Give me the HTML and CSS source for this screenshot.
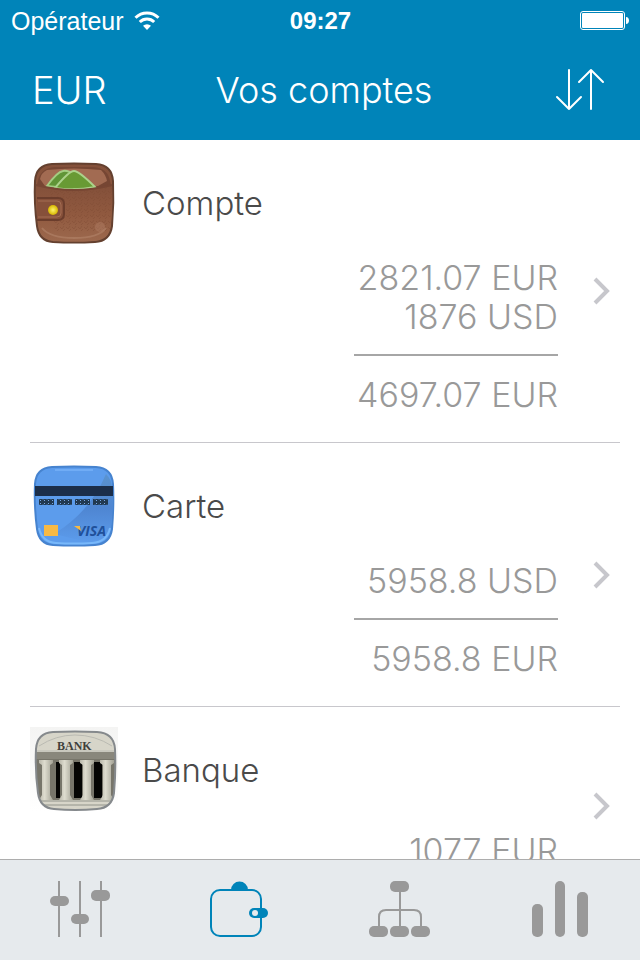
FILE: index.html
```html
<!DOCTYPE html>
<html lang="fr">
<head>
    <meta charset="UTF-8">
    <meta name="viewport" content="width=device-width, initial-scale=1.0">
    <title>Vos comptes</title>
    <link rel="stylesheet" href="styles.css">
</head>
<body>

<header class="app-header">
    <div class="status-bar">
        <div class="carrier">
            <span>Opérateur</span>
            <svg class="wifi-icon" width="26" height="20" viewBox="0 0 26 20" aria-hidden="true">
                <path d="M1.500 6.800a16.300 16.300 0 0 1 23 0" fill="none" stroke="#fff" stroke-width="3"/>
                <path d="M5.800 11a10.200 10.200 0 0 1 14.400 0" fill="none" stroke="#fff" stroke-width="3"/>
                <path d="M13 19l-4-4.200a5.700 5.700 0 0 1 8 0z" fill="#fff"/>
            </svg>
        </div>
        <div class="clock">09:27</div>
        <div class="battery">
            <svg width="50" height="20" viewBox="0 0 50 20" aria-hidden="true">
                <rect x="0.500" y="0.500" width="44" height="18" rx="2.500" fill="none" stroke="#fff"/>
                <rect x="2" y="2" width="41" height="15" rx="1" fill="#fff"/>
                <path d="M46 6c4 0 4 7 0 7z" fill="#fff"/>
            </svg>
        </div>
    </div>
    <div class="title-bar">
        <button type="button" class="currency-button">EUR</button>
        <h1>Vos comptes</h1>
        <button type="button" class="sort-button" aria-label="Trier">
            <svg width="50" height="44" viewBox="0 0 50 44" fill="none" stroke="#fff" stroke-width="2" stroke-linecap="round" stroke-linejoin="round">
                <path d="M14 2v39M2 29l12 12 12-12"/>
                <path d="M36 41V2M24 14L36 2l12 12"/>
            </svg>
        </button>
    </div>
</header>

<main class="accounts">
    <a href="#compte" class="account">
        <span class="account-body">
            <span class="account-head">
                <svg class="account-icon" viewBox="0 0 88 88" aria-hidden="true">
                    <defs>
                        <linearGradient id="leather" x1="0" y1="0" x2="0" y2="1">
                            <stop offset="0" stop-color="#83503a"/>
                            <stop offset="0.500" stop-color="#90593f"/>
                            <stop offset="1" stop-color="#9c684d"/>
                        </linearGradient>
                        <pattern id="grain" width="6" height="6" patternUnits="userSpaceOnUse">
                            <path d="M0 2l2 2 2-3M3 6l2-2" fill="none" stroke="#7c4833" stroke-width="1" opacity="0.400"/>
                        </pattern>
                        <radialGradient id="button">
                            <stop offset="0" stop-color="#fff36b"/>
                            <stop offset="1" stop-color="#d6b500"/>
                        </radialGradient>
                    </defs>
                    <path d="M22 5Q44 4 66 5Q82 6 83 22Q84 44 82 67Q80 82 65 83Q44 84 23 83Q9 82 7 67Q4 44 5 22Q6 6 22 5z" fill="url(#leather)" stroke="#64402f" stroke-width="2"/>
                    <path d="M25 8H63Q78 9 80 22L81 26Q44 40 7 26Q9 9 25 8z" fill="#764633"/>
                    <path d="M17 11Q44 8 71 11Q76 16 77 22L68 27H15L10 20Q11 14 17 11z" fill="#a26b52"/>
                    <path d="M17 27Q27 13 33 12Q38 11 44 16L36 29z" fill="#609537" stroke="#a4cc82" stroke-width="2"/>
                    <path d="M25 29Q39 12 44 12Q49 12 65 28Q45 32 25 29z" fill="#689a34" stroke="#acd28b" stroke-width="2"/>
                    <path d="M6 26Q44 36 82 26Q83 46 81 64Q79 81 62 82Q44 83 26 82Q10 81 8 64Q6 46 6 26z" fill="url(#leather)"/>
                    <path d="M20 31Q50 33 82 27L80 72L25 73z" fill="url(#grain)"/>
                    <path d="M6 26Q44 36 82 26" fill="none" stroke="#774633" stroke-width="2"/>
                    <path d="M7 39H28Q34 39 34 45V55Q34 61 28 61H7" fill="#86503a" stroke="#6b3d2c" stroke-width="2"/>
                    <path d="M8 42H27Q31 42 31 46V54Q31 58 27 58H8" fill="none" stroke="#a36c52" stroke-width="1"/>
                    <circle cx="23" cy="51" r="5" fill="url(#button)"/>
                    <path d="M12 69Q20 79 44 79Q69 79 76 69" fill="none" stroke="#b8896f" stroke-width="2" opacity="0.500"/>
                    <circle cx="70" cy="68" r="5" fill="#b48369" opacity="0.400"/>
                </svg>
                <span class="account-name">Compte</span>
            </span>
            <span class="amounts">
                <span>2821.07 EUR</span>
                <span>1876 USD</span>
                <span class="total">4697.07 EUR</span>
            </span>
        </span>
        <svg class="chevron" width="20" height="28" viewBox="0 0 20 28" aria-hidden="true"><path d="M4 2l12 12L4 26"/></svg>
    </a>

    <a href="#carte" class="account">
        <span class="account-body">
            <span class="account-head">
                <svg class="account-icon" viewBox="0 0 88 88" aria-hidden="true">
                    <defs>
                        <linearGradient id="shine" x1="0" y1="0" x2="0" y2="1">
                            <stop offset="0" stop-color="#5a93cf"/>
                            <stop offset="0.500" stop-color="#4f86d2"/>
                            <stop offset="1" stop-color="#5c9cec"/>
                        </linearGradient>
                        <pattern id="digits" x="9" y="37" width="4" height="6" patternUnits="userSpaceOnUse">
                            <rect width="4" height="6" rx="1" fill="#213951"/>
                            <rect x="1" y="1" width="1" height="1" fill="#79a8e8"/>
                            <rect x="1" y="4" width="1" height="1" fill="#79a8e8"/>
                        </pattern>
                    </defs>
                    <path d="M22 5Q44 4 66 5Q82 6 83 22Q84 44 82 67Q80 82 65 83Q44 84 23 83Q9 82 7 67Q4 44 5 22Q6 6 22 5z" fill="#5c9cec" stroke="#4683cf" stroke-width="2"/>
                    <path d="M24 72Q60 50 76 12Q82 18 82 26Q84 44 81 64Q79 80 62 81z" fill="url(#shine)"/>
                    <path d="M9 66Q12 80 26 81Q44 82 62 81Q77 80 80 66" fill="none" stroke="#78b8fa" stroke-width="2"/>
                    <path d="M25 8H63" stroke="#70acf5" stroke-width="2"/>
                    <rect x="5" y="24" width="78" height="10" fill="#1b2e4a"/>
                    <path d="M9 37h15v6H9zM27 37h15v6H27zM45 37h15v6H45zM63 37h15v6H63z" fill="url(#digits)"/>
                    <rect x="14" y="63" width="14" height="11" fill="#f7b944"/>
                    <text x="47" y="74" class="visa">VISA</text>
                    <path d="M44 64h6l1 5z" fill="#f7b944"/>
                </svg>
                <span class="account-name">Carte</span>
            </span>
            <span class="amounts">
                <span>5958.8 USD</span>
                <span class="total">5958.8 EUR</span>
            </span>
        </span>
        <svg class="chevron" width="20" height="28" viewBox="0 0 20 28" aria-hidden="true"><path d="M4 2l12 12L4 26"/></svg>
    </a>

    <a href="#banque" class="account">
        <span class="account-body">
            <span class="account-head">
                <svg class="account-icon" viewBox="0 0 88 88" aria-hidden="true">
                    <defs>
                        <linearGradient id="column">
                            <stop offset="0" stop-color="#b9b7aa"/>
                            <stop offset="0.400" stop-color="#dedccf"/>
                            <stop offset="1" stop-color="#a3a295"/>
                        </linearGradient>
                        <linearGradient id="backdrop" x1="0" y1="0" x2="0" y2="1">
                            <stop offset="0" stop-color="#f4f4f3"/>
                            <stop offset="1" stop-color="#fff"/>
                        </linearGradient>
                        <clipPath id="facade">
                            <path d="M23 6Q45 5 67 6Q84 7 85 23Q86 45 84 67Q82 82 67 83Q45 85 24 83Q10 82 8 67Q5 45 6 23Q7 7 23 6z"/>
                        </clipPath>
                    </defs>
                    <rect x="0" y="1" width="88" height="84" fill="url(#backdrop)"/>
                    <g clip-path="url(#facade)">
                        <path d="M0 0h88v88H0z" fill="#d7d5c9"/>
                        <path d="M9 20Q26 9 45 9Q65 9 82 20M6 25h80" fill="none" stroke="#babab2" stroke-width="1"/>
                        <path d="M5 26h82v7H5z" fill="#89877c"/>
                        <path d="M5 33h82v41H5z" fill="#77756a"/>
                        <path d="M26 36h4v36h-4zM44 36h8v36h-8zM64 36h8v36h-8z" fill="#050504"/>
                        <g fill="url(#column)">
                            <path d="M9 34h14v3l-3 2v30l3 5H9l3-5V39l-3-2z"/>
                            <path d="M29 34h14v3l-3 2v30l3 5H29l3-5V39l-3-2z"/>
                            <path d="M50 34h14v3l-3 2v30l3 5H50l3-5V39l-3-2z"/>
                            <path d="M70 34h14v3l-3 2v30l3 5H70l3-5V39l-3-2z"/>
                        </g>
                        <path d="M8 75h75M14 79h64" fill="none" stroke="#92948b" stroke-width="1"/>
                    </g>
                    <path d="M23 6Q45 5 67 6Q84 7 85 23Q86 45 84 67Q82 82 67 83Q45 85 24 83Q10 82 8 67Q5 45 6 23Q7 7 23 6z" fill="none" stroke="#85898c" stroke-width="2"/>
                    <text x="27" y="24" class="bank">BANK</text>
                </svg>
                <span class="account-name">Banque</span>
            </span>
            <span class="amounts">
                <span>1077 EUR</span>
            </span>
        </span>
        <svg class="chevron" width="20" height="28" viewBox="0 0 20 28" aria-hidden="true"><path d="M4 2l12 12L4 26"/></svg>
    </a>
</main>

<nav class="tab-bar">
    <a href="#reglages" aria-label="Réglages">
        <svg width="64" height="60" viewBox="0 0 64 60" fill="#999">
            <path d="M10 2h2v56h-2zM31 2h2v56h-2zM52 2h2v56h-2z"/>
            <rect x="2" y="17" width="19" height="10" rx="5"/>
            <rect x="23" y="35" width="18" height="10" rx="5"/>
            <rect x="43" y="11" width="19" height="11" rx="5"/>
        </svg>
    </a>
    <a href="#comptes" aria-label="Comptes" aria-current="page">
        <svg width="64" height="60" viewBox="0 0 64 60">
            <path d="M23 11a8.500 8.500 0 0 1 17 0z" fill="#0084b9"/>
            <rect x="3" y="11" width="50" height="46" rx="9" fill="none" stroke="#0084b9" stroke-width="2"/>
            <rect x="41" y="29" width="19" height="10" rx="5" fill="#0084b9"/>
            <circle cx="47" cy="34" r="3" fill="#e6eaed"/>
        </svg>
    </a>
    <a href="#categories" aria-label="Catégories">
        <svg width="64" height="60" viewBox="0 0 64 60" fill="#999">
            <path d="M32 12v36M11 48V38q0-7 7-7h28q7 0 7 7v10" fill="none" stroke="#999" stroke-width="2"/>
            <rect x="22" y="2" width="19" height="11" rx="5"/>
            <rect x="1" y="47" width="19" height="11" rx="5"/>
            <rect x="22" y="47" width="19" height="11" rx="5"/>
            <rect x="43" y="47" width="19" height="11" rx="5"/>
        </svg>
    </a>
    <a href="#statistiques" aria-label="Statistiques">
        <svg width="64" height="60" viewBox="0 0 64 60" fill="#999">
            <rect x="4" y="25" width="11" height="33" rx="5"/>
            <rect x="27" y="2" width="10" height="56" rx="5"/>
            <rect x="49" y="13" width="11" height="45" rx="5"/>
        </svg>
    </a>
</nav>

</body>
</html>
```

FILE: styles.css
```css
/* Global Styles */
* {
    box-sizing: border-box;
}

body {
    font-family: 'Inter', 'Liberation Sans', sans-serif;
    font-weight: 300;
    background: white;
    color: #4a4a4a;
    margin: 0;
    height: 100vh;
    display: flex;
    flex-direction: column;
}

button {
    background: none;
    border: none;
    padding: 0;
    color: inherit;
    font: inherit;
    cursor: pointer;
}

a {
    color: inherit;
    text-decoration: none;
}

svg {
    display: block;
}

/* Header */
.app-header {
    background: #0084b9;
    color: white;
    flex: none;
}

.status-bar {
    display: grid;
    grid-template-columns: 1fr auto 1fr;
    align-items: center;
    height: 42px;
    padding: 0 10px 0 11px;
    font-family: 'Liberation Sans', Arial, sans-serif;
    font-size: 25px;
    font-weight: 400;
}

.carrier {
    display: flex;
    align-items: center;
    gap: 10px;
}

.clock {
    font-size: 24px;
    font-weight: 700;
}

.battery {
    justify-self: end;
}

.title-bar {
    display: grid;
    grid-template-columns: 1fr auto 1fr;
    align-items: center;
    height: 98px;
    padding: 0 24px 2px 32px;
    font-size: 38px;
}

.title-bar h1 {
    margin: 0;
    font-size: 36px;
    font-weight: inherit;
}

.currency-button {
    justify-self: start;
}

.sort-button {
    justify-self: end;
    padding-right: 11px;
}

/* Account list */
.accounts {
    flex: 1;
    min-height: 0;
    overflow: hidden;
}

.account {
    display: flex;
    align-items: center;
    min-height: 198px;
    margin: 0 20px 0 30px;
    border-bottom: 1px solid #c8c7cc;
}

.account-body {
    flex: 1;
    align-self: stretch;
    display: flex;
    flex-direction: column;
}

.account-head {
    display: flex;
    align-items: center;
    gap: 24px;
    height: 118px;
    padding-top: 8px;
    color: #4a4a4a;
    font-size: 33px;
}

.account-icon {
    width: 88px;
    height: 88px;
}

.amounts {
    flex: 1;
    display: flex;
    flex-direction: column;
    align-items: flex-end;
    justify-content: center;
    padding-bottom: 28px;
    color: #999;
    font-size: 34px;
    line-height: 39px;
}

.total {
    min-width: 204px;
    margin-top: 18px;
    padding-top: 19px;
    border-top: 2px solid #a6a6a6;
    text-align: right;
}

.chevron {
    flex: none;
    margin: 0 9px 0 33px;
    fill: none;
    stroke: #c7c7cc;
    stroke-width: 4;
}

.visa {
    font: italic 700 14px 'Open Sans', sans-serif;
    fill: #20509a;
}

.bank {
    font: 700 12px 'Liberation Serif', serif;
    fill: #3f403b;
}

/* Tab bar */
.tab-bar {
    flex: none;
    display: flex;
    height: 101px;
    background: #e6eaed;
    border-top: 1px solid #adadad;
}

.tab-bar a {
    flex: 1;
    display: flex;
    align-items: center;
    justify-content: center;
    padding-bottom: 2px;
}
```
